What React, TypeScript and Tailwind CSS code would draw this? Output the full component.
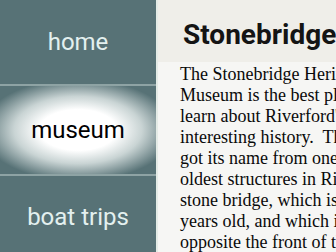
const navItems = [
  { label: "home", active: false },
  { label: "museum", active: true },
  { label: "boat trips", active: false },
];

export default function App() {
  return (
    <div className="flex h-[252px] w-[336px] overflow-hidden bg-[#f6f6f4]">
      <nav className="flex w-[158px] shrink-0 flex-col border-r-2 border-[#e4ebe6] bg-[#577276] font-['Roboto',sans-serif]">
        {navItems.map((item, i) => (
          <div
            key={item.label}
            className={
              "flex h-[84px] shrink-0 items-center justify-center text-[24px] " +
              (i > 0 ? "border-t-2 border-[#8ea3a4] " : "") +
              (item.active
                ? "h-[90px] bg-[radial-gradient(ellipse_62%_58%_at_50%_50%,#ffffff_0%,#ffffff_40%,#c9d4d4_66%,#577276_100%)] text-black"
                : "text-[#e3f0ef]")
            }
          >
            {item.label}
          </div>
        ))}
      </nav>
      <main className="flex w-[320px] shrink-0 flex-col">
        <div className="h-[62px] shrink-0 whitespace-nowrap bg-[#efeee9] pl-[25px] pt-[21px] font-['Roboto',sans-serif] text-[28px] font-bold leading-none text-[#141414]">
          Stonebridge Heritage Museum
        </div>
        <p className="whitespace-nowrap pl-[22px] pt-[2px] font-['Liberation_Serif',serif] text-[18px] leading-[21px] text-[#0a0a0a]">
          The Stonebridge Heritage
          <br />
          Museum is the best place to
          <br />
          learn about Riverford's
          <br />
          interesting history.&nbsp; The museum
          <br />
          got its name from one of the
          <br />
          oldest structures in Riverford, the
          <br />
          stone bridge, which is over 200
          <br />
          years old, and which is located
          <br />
          opposite the front of the museum.
        </p>
      </main>
    </div>
  );
}
